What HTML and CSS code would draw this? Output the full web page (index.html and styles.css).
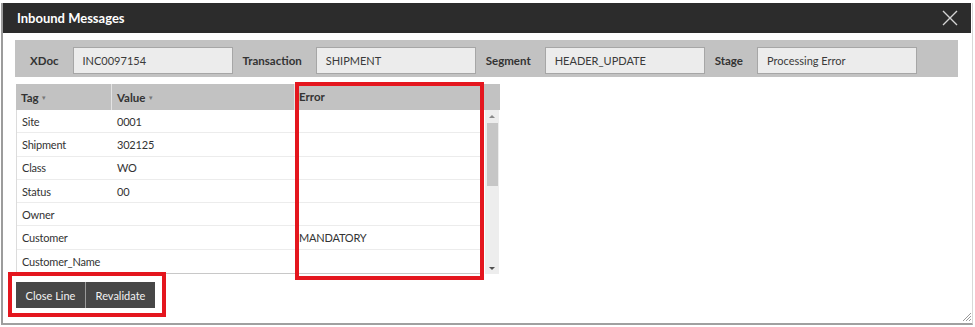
FILE: index.html
```
<!DOCTYPE html>
<html>
<head>
<meta charset="utf-8">
<link rel="stylesheet" href="styles.css">
</head>
<body>
<div class="dialog">
  <div class="titlebar">
    <span class="title">Inbound Messages</span>
    <svg class="close" width="16" height="16" viewBox="0 0 16 16"><path d="M1 1 L15 15 M15 1 L1 15" stroke="#d4d4d4" stroke-width="1.4" fill="none"/></svg>
  </div>
  <div class="content">
    <div class="band">
      <span class="lbl first">XDoc</span><div class="inp">INC0097154</div>
      <span class="lbl">Transaction</span><div class="inp">SHIPMENT</div>
      <span class="lbl">Segment</span><div class="inp">HEADER_UPDATE</div>
      <span class="lbl">Stage</span><div class="inp">Processing Error</div>
    </div>
    <div class="grid">
      <div class="table">
        <div class="hrow">
          <div class="hc c1">Tag <span class="sort">▾</span></div>
          <div class="hc c2">Value <span class="sort">▾</span></div>
          <div class="hc c3">Error</div>
          <div class="hc c4"></div>
        </div>
        <div class="bodywrap">
          <div class="rows">
            <div class="row"><div class="c1">Site</div><div class="c2">0001</div><div class="c3"></div></div>
            <div class="row"><div class="c1">Shipment</div><div class="c2">302125</div><div class="c3"></div></div>
            <div class="row"><div class="c1">Class</div><div class="c2">WO</div><div class="c3"></div></div>
            <div class="row"><div class="c1">Status</div><div class="c2">00</div><div class="c3"></div></div>
            <div class="row"><div class="c1">Owner</div><div class="c2"></div><div class="c3"></div></div>
            <div class="row"><div class="c1">Customer</div><div class="c2"></div><div class="c3 err">MANDATORY</div></div>
            <div class="row"><div class="c1">Customer_Name</div><div class="c2"></div><div class="c3"></div></div>
          </div>
          <div class="scroll">
            <div class="arrow up"></div>
            <div class="thumb"></div>
            <div class="track"></div>
            <div class="arrow down"></div>
          </div>
        </div>
      </div>
    </div>
    <div class="actions">
      <button class="btn sep">Close Line</button><button class="btn">Revalidate</button>
    </div>
  </div>
  <div class="mark mark-error"></div>
  <div class="mark mark-btns"></div>
  <svg class="grip" width="10" height="10" viewBox="0 0 10 10"><path d="M9 1 L1 9 M9 4 L4 9 M9 7 L7 9" stroke="#9a9a9a" stroke-width="1" fill="none"/></svg>
</div>
</body>
</html>
```
FILE: styles.css
```
* { box-sizing: border-box; }
html, body { margin: 0; padding: 0; background: #fff; }
body { padding-top: 3px; font-family: Lato, "Open Sans", sans-serif; color: #333; font-size: 11px; }
.dialog {
  position: relative;
  margin-left: 1px;
  width: 972px;
  height: 322px;
  border-left: 2px solid #9c9c9c;
  border-bottom: 2px solid #a0a0a0;
  border-right: 1px solid #d8d8d8;
}
.titlebar {
  height: 30px;
  margin-right: 1px;
  background: #2c2c2c;
  display: flex;
  align-items: center;
  justify-content: space-between;
  padding: 0 13px 0 14px;
}
.title { color: #fff; font-weight: 700; font-size: 13px; }
.close { display: block; }
.content { padding: 7px 0 0 12px; }
.band {
  width: 943px;
  height: 37px;
  background: #c2c2c2;
  display: flex;
  align-items: flex-start;
  padding-top: 7px;
}
.lbl {
  font-weight: 700;
  font-size: 11.5px;
  color: #333;
  margin: 0 14px 0 10px;
  line-height: 27px;
}
.lbl.first { margin-left: 15px; }
.inp {
  width: 160px;
  height: 27px;
  background: #ececec;
  border: 1px solid #a6a6a6;
  padding-left: 9px;
  line-height: 25px;
  color: #3a3a3a;
}
.grid { margin-top: 7px; padding-left: 1px; }
.table { width: 484px; }
.hrow { display: flex; height: 26px; background: #c2c2c2; }
.hc {
  font-weight: 700;
  font-size: 11.5px;
  line-height: 26px;
  color: #333;
  border-right: 1px solid #e4e4e4;
}
.hc.c3 { border-right: 2px solid #fff; }
.hc.c4 { border-right: none; flex: 1; }
.sort { font-size: 7px; color: #777; vertical-align: 2px; font-weight: 400; margin-left: 1px; }
.c1 { width: 96px; padding-left: 5px; }
.c2 { width: 183px; padding-left: 5px; }
.c3 { width: 188px; padding-left: 4px; }
.bodywrap { display: flex; }
.rows { width: 467px; border-left: 1px solid #dcdcdc; border-bottom: 1px solid #c8c8c8; letter-spacing: -0.2px; }
.rows .c1 { width: 95px; }
.row {
  display: flex;
  height: 23.3px;
  border-bottom: 1px solid #ececec;
  align-items: center;
  background: #fff;
}
.row:last-child { border-bottom: none; }
.err { color: #333; }
.scroll {
  margin-left: 2px;
  width: 14px;
  background: #ededed;
  display: flex;
  flex-direction: column;
  align-items: center;
  padding: 0 1px;
}
.arrow { width: 0; height: 0; border-left: 3px solid transparent; border-right: 3px solid transparent; }
.arrow.up { margin-top: 5px; border-bottom: 3px solid #8a8a8a; }
.arrow.down { margin-bottom: 4px; border-top: 3px solid #505050; }
.thumb { width: 11px; height: 63px; background: #c6c6c6; margin-top: 5px; }
.track { flex: 1; }
.actions { margin-top: 8px; padding-left: 1px; display: flex; }
.btn {
  height: 26px;
  border: none;
  background: #474747;
  color: #f2f2f2;
  font-family: Lato, "Open Sans", sans-serif;
  font-size: 11px;
  padding: 0;
  width: 69px;
  margin: 0;
}
.btn.sep { border-right: 1px solid #9a9a9a; width: 70px; }
.mark { position: absolute; border: 4px solid #e4161e; }
.mark-error { left: 292px; top: 79px; width: 189px; height: 198px; }
.mark-btns { left: 5px; top: 269px; width: 158px; height: 45px; }
.grip { position: absolute; right: 0; bottom: 1px; }
```
